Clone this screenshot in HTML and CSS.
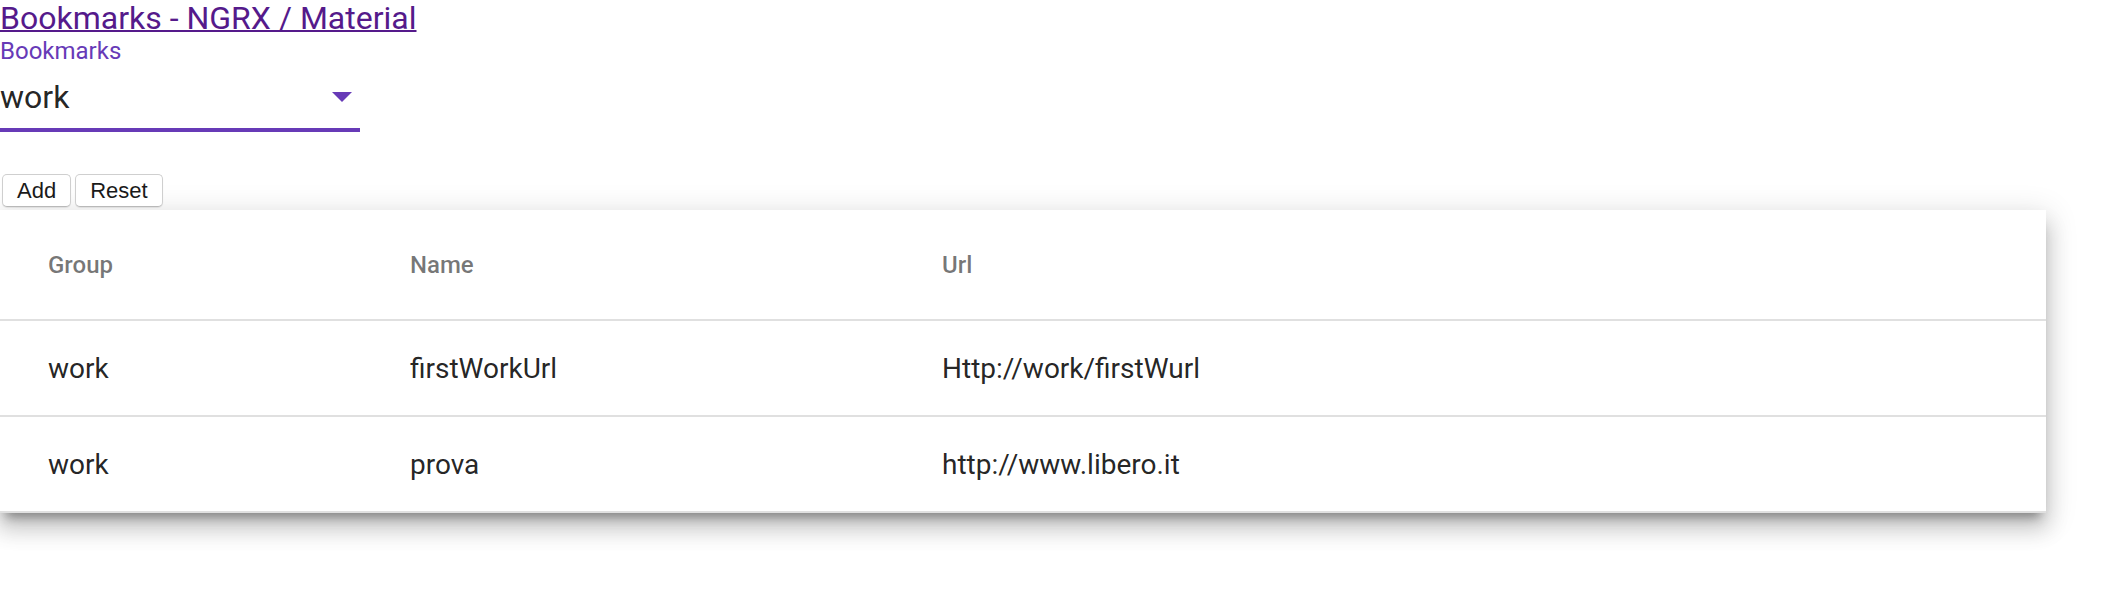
FILE: index.html
```html
<!DOCTYPE html>
<html lang="en">
<head>
<meta charset="utf-8">
<title>Bookmarks - NGRX / Material</title>
<link rel="stylesheet" href="styles.css">
</head>
<body>
  <div class="app-title"><a class="app-link" href="#">Bookmarks - NGRX / Material</a></div>

  <div class="field">
    <label class="field-label">Bookmarks</label>
    <div class="select">
      <span class="select-value">work</span>
      <span class="select-arrow"></span>
    </div>
    <div class="field-underline"></div>
  </div>

  <div class="actions">
    <button class="btn" type="button">Add</button>
    <button class="btn" type="button">Reset</button>
  </div>

  <div class="table-card">
    <table class="bookmarks">
      <colgroup>
        <col class="col-group">
        <col class="col-name">
        <col class="col-url">
      </colgroup>
      <thead>
        <tr>
          <th>Group</th>
          <th>Name</th>
          <th>Url</th>
        </tr>
      </thead>
      <tbody>
        <tr>
          <td>work</td>
          <td>firstWorkUrl</td>
          <td>Http://work/firstWurl</td>
        </tr>
        <tr>
          <td>work</td>
          <td>prova</td>
          <td>http://www.libero.it</td>
        </tr>
      </tbody>
    </table>
  </div>
</body>
</html>
```
FILE: styles.css
```css
html, body {
  margin: 0;
  padding: 0;
  background: #ffffff;
}

body {
  font-family: Roboto, "Helvetica Neue", "Liberation Sans", sans-serif;
  color: rgba(0, 0, 0, 0.87);
  padding-bottom: 60px;
}

.app-title {
  font-size: 32px;
  line-height: 37px;
}

.app-link {
  color: #551a8b;
  text-decoration: underline;
  text-decoration-thickness: 2px;
}

.field {
  width: 360px;
}

.field-label {
  display: block;
  font-size: 24px;
  line-height: 28px;
  color: #673ab7;
}

.select {
  display: flex;
  align-items: center;
  justify-content: space-between;
  margin-top: 13px;
  padding-right: 8px;
  height: 38px;
}

.select-value {
  font-size: 32px;
  line-height: 38px;
  color: rgba(0, 0, 0, 0.87);
}

.select-arrow {
  width: 0;
  height: 0;
  border-left: 10px solid transparent;
  border-right: 10px solid transparent;
  border-top: 10px solid #673ab7;
}

.field-underline {
  margin-top: 12px;
  height: 4px;
  background: #673ab7;
}

.actions {
  display: flex;
  gap: 4px;
  margin-top: 42px;
  padding-left: 2px;
}

.btn {
  font-family: "Liberation Sans", Arial, sans-serif;
  font-size: 22px;
  color: #1a1a1a;
  height: 33px;
  padding: 0 14px;
  margin: 0;
  background: #ffffff;
  border: 1px solid #cfcfcf;
  border-bottom-color: #b9b9b9;
  border-radius: 5px;
  box-shadow: 0 1px 1px rgba(0, 0, 0, 0.08);
}

.table-card {
  margin-top: 3px;
  width: 2046px;
  background: #ffffff;
  box-shadow: 0 10px 10px -6px rgba(0, 0, 0, 0.35),
              0 16px 20px 2px rgba(0, 0, 0, 0.14),
              0 6px 28px 4px rgba(0, 0, 0, 0.12);
}

.bookmarks {
  width: 100%;
  table-layout: fixed;
  border-collapse: separate;
  border-spacing: 0;
}

.col-group { width: 410px; }
.col-name { width: 532px; }
.col-url { width: auto; }

.bookmarks th,
.bookmarks td {
  box-sizing: border-box;
  padding: 0;
  text-align: left;
  vertical-align: middle;
  border-bottom: 2px solid #e0e0e0;
}

.bookmarks th:first-child,
.bookmarks td:first-child {
  padding-left: 48px;
}

.bookmarks th:last-child,
.bookmarks td:last-child {
  padding-right: 48px;
}

.bookmarks th {
  height: 111px;
  font-size: 24px;
  font-weight: 500;
  color: rgba(0, 0, 0, 0.54);
}

.bookmarks td {
  height: 96px;
  font-size: 28px;
  color: rgba(0, 0, 0, 0.87);
}
```
